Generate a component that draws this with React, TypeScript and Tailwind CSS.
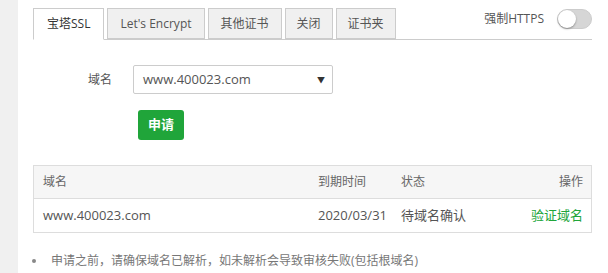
import React from "react";

const font = { fontFamily: '"Open Sans", "Noto Sans CJK SC", sans-serif' };

export default function App() {
  const tabs = [
    { t: "宝塔SSL", px: "px-[13px]" },
    { t: "Let's Encrypt", px: "px-[12px]" },
    { t: "其他证书", px: "px-[12px]" },
    { t: "关闭", px: "px-[11px]" },
    { t: "证书夹", px: "px-[11px]" },
  ];
  return (
    <div className="flex w-[608px] h-[273px] bg-white text-[12px] text-[#555]" style={font}>
      <div className="w-[18px] shrink-0 bg-[#f0f0f0]" />
      <div className="flex-1 pl-[15px] pr-[16px] pt-[8px]">
        <div className="flex items-end justify-between border-b border-[#ccc] h-[32px]">
          <div className="flex gap-[3px] h-full">
            {tabs.map((tab, i) => (
              <div
                key={tab.t}
                className={
                  i === 0
                    ? `h-[32px] -mb-px ${tab.px} flex items-center border border-[#ccc] border-b-white bg-white text-[#333]`
                    : `h-[31px] ${tab.px} flex items-center border border-[#ccc] bg-[#f0f0f0] text-[#555]`
                }
              >
                {tab.t}
              </div>
            ))}
          </div>
          <div className="flex items-center gap-[13px] self-start mt-[1px]">
            <span className="text-[#555]">强制HTTPS</span>
            <div className="w-[35px] h-[20px] rounded-full bg-[#d6d6d6] border border-[#ccc] relative">
              <div className="absolute left-0 top-0 w-[18px] h-[18px] rounded-full bg-white shadow-[0_1px_2px_rgba(0,0,0,0.35)]" />
            </div>
          </div>
        </div>

        <div className="flex items-center mt-[25px]">
          <span className="w-[100px] text-right pr-[21px] text-[#555] text-[12px]">域名</span>
          <div className="w-[200px] h-[29px] border border-[#ccc] rounded-[2px] flex items-center justify-between pl-[9px] pr-[7px] text-[13px] text-[#555]">
            <span>www.400023.com</span>
            <span className="text-[8px] text-[#333]">▼</span>
          </div>
        </div>
        <div className="pl-[105px] mt-[16px]">
          <div className="w-[46px] h-[30px] rounded-[3px] bg-[#20a53a] text-white flex items-center justify-center text-[13px] font-bold">
            申请
          </div>
        </div>

        <div className="mt-[25px] border border-[#ddd]">
          <div className="flex h-[33px] items-center bg-[#f6f6f6] border-b border-[#ddd] text-[#666]">
            <div className="w-[284px] pl-[9px]">域名</div>
            <div className="w-[83px]">到期时间</div>
            <div className="flex-1">状态</div>
            <div className="pr-[8px]">操作</div>
          </div>
          <div className="flex h-[33px] items-center text-[13px] text-[#555]">
            <div className="w-[284px] pl-[9px]">www.400023.com</div>
            <div className="w-[83px]">2020/03/31</div>
            <div className="flex-1">待域名确认</div>
            <div className="pr-[8px] text-[#20a53a]">验证域名</div>
          </div>
        </div>

        <div className="flex items-center mt-[19px] text-[#777]">
          <span className="w-[18px] flex">
            <span className="ml-[-1px] w-[4px] h-[4px] rounded-full bg-[#888]" />
          </span>
          <span>申请之前，请确保域名已解析，如未解析会导致审核失败(包括根域名)</span>
        </div>
      </div>
    </div>
  );
}
